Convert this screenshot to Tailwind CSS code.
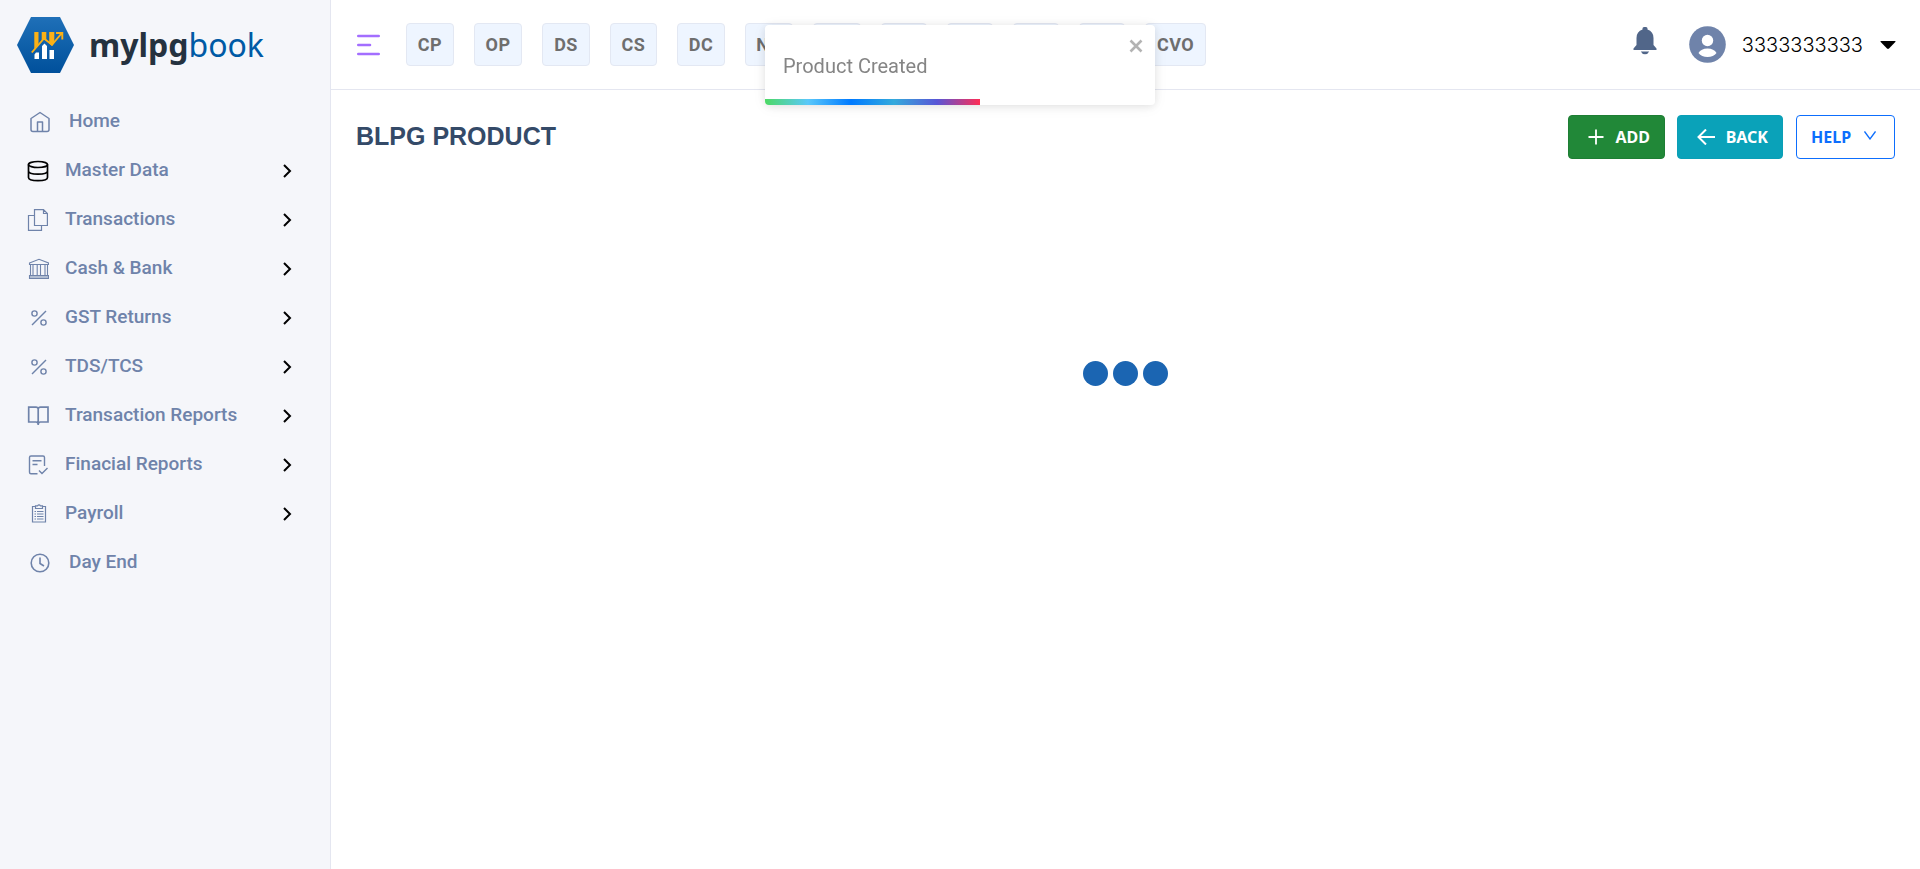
<!DOCTYPE html>
<html lang="en">
<head>
<meta charset="utf-8">
<meta name="viewport" content="width=device-width, initial-scale=1">
<title>mylpgbook</title>
<script src="https://cdn.jsdelivr.net/npm/@tailwindcss/browser@4"></script>
</head>
<body class="flex min-h-screen bg-white font-['Roboto',sans-serif]">

<aside class="w-[331px] shrink-0 border-r border-[#e4e6f0] bg-[#f5f6fa]">
  <a href="#" class="flex h-[90px] items-center pl-4">
    <svg class="h-[58px] w-[59px]" viewBox="0 0 59 58">
      <defs><linearGradient id="hex" x1="0" y1="0" x2="0" y2="1"><stop offset="0" stop-color="#1f70b8"/><stop offset="1" stop-color="#00509b"/></linearGradient></defs>
      <path d="M15 1H44L58 29L44 57H15L1 29Z" fill="url(#hex)"/>
      <path d="M18.500 43V38.500L20 36.500H23V43ZM26 43V30L28.500 27.500L31 30V43ZM33.500 43V34H38V43Z" fill="#fff"/>
      <path d="M18.300 16H22.500V28L18.300 33ZM25.700 16H30.300V25L28 22L25.700 25ZM33.200 16H38.300V27L36 30L33.200 27.500Z" fill="#fbb116"/>
      <path d="M15.800 36.500L28 22.500L36 28.800L45.500 17.500M40 17H46.300V23.500" fill="none" stroke="#fbb116" stroke-width="1.900"/>
    </svg>
    <span class="ml-3.5 font-['Noto_Sans',sans-serif] text-[32px] leading-10 text-[#005aa5]"><b class="font-bold text-[#25323f]">mylpg</b>book</span>
  </a>
  <nav class="flex flex-col pt-[7px] text-[19px] font-medium text-[#6f83aa]">
    <a href="#" class="flex h-[49px] items-center gap-[18px] pl-[29px]">
      <svg class="size-[22px]" viewBox="0 0 22 22" fill="none" stroke="currentColor" stroke-width="1.500" stroke-linejoin="round"><path d="M2 7.500L11 1.500L20 7.500V18.500Q20 20.500 18 20.500H4Q2 20.500 2 18.500ZM8.500 20.500V11H13.500V20.500"/></svg>Home</a>
    <a href="#" class="flex h-[49px] items-center gap-4 pr-[37px] pl-[27px]">
      <svg class="size-[22px] text-black" viewBox="0 0 22 22" fill="none" stroke="currentColor" stroke-width="1.700"><ellipse cx="11" cy="4.500" rx="9.500" ry="3"/><path d="M1.500 4.500V17.500C1.500 21.700 20.500 21.700 20.500 17.500V4.500M1.500 11C1.500 15.200 20.500 15.200 20.500 11"/></svg>Master Data
      <svg class="ml-auto h-4 w-3 text-black" viewBox="0 0 12 16" fill="none" stroke="currentColor" stroke-width="2"><path d="M3 2L9 8L3 14"/></svg></a>
    <a href="#" class="flex h-[49px] items-center gap-4 pr-[37px] pl-[27px]">
      <svg class="size-[22px]" viewBox="0 0 22 22" fill="none" stroke="currentColor" stroke-width="1.200"><path d="M7.500 .600H16.500L20.400 4.500V16.500H7.500ZM16.500 .600V4.500H20.400M7.500 6.500H1.500V21.400H14.500V16.500"/></svg>Transactions
      <svg class="ml-auto h-4 w-3 text-black" viewBox="0 0 12 16" fill="none" stroke="currentColor" stroke-width="2"><path d="M3 2L9 8L3 14"/></svg></a>
    <a href="#" class="flex h-[49px] items-center gap-4 pr-[37px] pl-[27px]">
      <svg class="size-[22px]" viewBox="0 0 22 22" fill="none" stroke="currentColor" stroke-width="1.100"><path d="M2.500 5L12 1.300L21.500 5V6.500H2.500ZM3.500 6.500V17.500M6 6.500V17.500M10.200 6.500V17.500M13.500 6.500V17.500M18 6.500V17.500M20.500 6.500V17.500M2.500 17.500H21.500V20.500H2.500ZM2.500 19H21.500"/></svg>Cash &amp; Bank
      <svg class="ml-auto h-4 w-3 text-black" viewBox="0 0 12 16" fill="none" stroke="currentColor" stroke-width="2"><path d="M3 2L9 8L3 14"/></svg></a>
    <a href="#" class="flex h-[49px] items-center gap-4 pr-[37px] pl-[27px]">
      <svg class="size-[22px]" viewBox="0 0 22 22" fill="none" stroke="currentColor" stroke-width="1.400"><circle cx="7.500" cy="6.500" r="2.600"/><circle cx="16.500" cy="15.500" r="2.600"/><path d="M19 4L5 18"/></svg>GST Returns
      <svg class="ml-auto h-4 w-3 text-black" viewBox="0 0 12 16" fill="none" stroke="currentColor" stroke-width="2"><path d="M3 2L9 8L3 14"/></svg></a>
    <a href="#" class="flex h-[49px] items-center gap-4 pr-[37px] pl-[27px]">
      <svg class="size-[22px]" viewBox="0 0 22 22" fill="none" stroke="currentColor" stroke-width="1.400"><circle cx="7.500" cy="6.500" r="2.600"/><circle cx="16.500" cy="15.500" r="2.600"/><path d="M19 4L5 18"/></svg>TDS/TCS
      <svg class="ml-auto h-4 w-3 text-black" viewBox="0 0 12 16" fill="none" stroke="currentColor" stroke-width="2"><path d="M3 2L9 8L3 14"/></svg></a>
    <a href="#" class="flex h-[49px] items-center gap-4 pr-[37px] pl-[27px]">
      <svg class="size-[22px]" viewBox="0 0 22 22" fill="none" stroke="currentColor" stroke-width="1.700"><path d="M11.200 4Q11 2.200 9 2.200H1.700V17H9Q11.200 17 11.200 19.500Q11.200 17 13.400 17H21V2.200H13.400Q11.400 2.200 11.200 4V20"/></svg>Transaction Reports
      <svg class="ml-auto h-4 w-3 text-black" viewBox="0 0 12 16" fill="none" stroke="currentColor" stroke-width="2"><path d="M3 2L9 8L3 14"/></svg></a>
    <a href="#" class="flex h-[49px] items-center gap-4 pr-[37px] pl-[27px]">
      <svg class="size-[22px]" viewBox="0 0 22 22" fill="none" stroke="currentColor" stroke-width="1.400"><path d="M10.500 19.800H4Q2.500 19.800 2.500 18.300V3.500Q2.500 2 4 2H16Q17.500 2 17.500 3.500V12M5.500 6.800H14.500M5.500 10.500H10.500M12 16.500L15 19.500L20.500 14"/></svg>Finacial Reports
      <svg class="ml-auto h-4 w-3 text-black" viewBox="0 0 12 16" fill="none" stroke="currentColor" stroke-width="2"><path d="M3 2L9 8L3 14"/></svg></a>
    <a href="#" class="flex h-[49px] items-center gap-4 pr-[37px] pl-[27px]">
      <svg class="size-[22px]" viewBox="0 0 22 22" fill="none" stroke="currentColor" stroke-width="1.200"><path d="M8.500 3.500H5.500V19H18.500V3.500H15.500M8.500 2.800H10.500Q12 .800 13.500 2.800H15.500V5.500H8.500ZM7.500 8.500H9M10 8.500H16.500M7.500 11H9M10 11H16.500M7.500 13.500H9M10 13.500H16.500M7.500 16H9M10 16H16.500"/></svg>Payroll
      <svg class="ml-auto h-4 w-3 text-black" viewBox="0 0 12 16" fill="none" stroke="currentColor" stroke-width="2"><path d="M3 2L9 8L3 14"/></svg></a>
    <a href="#" class="flex h-[49px] items-center gap-[18px] pl-[29px]">
      <svg class="size-[22px]" viewBox="0 0 22 22" fill="none" stroke="currentColor" stroke-width="1.600"><circle cx="11" cy="11" r="8.800"/><path d="M11 5.500V11.500L15 14"/></svg>Day End</a>
  </nav>
</aside>

<div class="min-w-0 grow">
  <header class="flex h-[90px] items-center border-b border-[#e4e6f0] pr-6 pl-[25px]">
    <button type="button" aria-label="Toggle menu" class="mr-[25px]">
      <svg class="h-[22px] w-[25px]" viewBox="0 0 25 22" fill="none" stroke="#a36eff" stroke-width="2.600" stroke-linecap="round"><path d="M2.300 2H22.700M2.300 11H14M2.300 20H22.700"/></svg>
    </button>
    <div class="flex gap-5 text-lg font-bold tracking-wide text-[#6e6e6e]">
      <button type="button" class="h-[43px] w-12 rounded border border-[#e3e8f3] bg-[#eef5ff]">CP</button>
      <button type="button" class="h-[43px] w-12 rounded border border-[#e3e8f3] bg-[#eef5ff]">OP</button>
      <button type="button" class="h-[43px] w-12 rounded border border-[#e3e8f3] bg-[#eef5ff]">DS</button>
      <button type="button" class="h-[43px] w-[47px] rounded border border-[#e3e8f3] bg-[#eef5ff]">CS</button>
      <button type="button" class="h-[43px] w-12 rounded border border-[#e3e8f3] bg-[#eef5ff]">DC</button>
      <button type="button" class="h-[43px] w-12 rounded border border-[#e3e8f3] bg-[#eef5ff]">NC</button>
      <button type="button" class="h-[43px] w-12 rounded border border-[#e3e8f3] bg-[#eef5ff]">RC</button>
      <button type="button" class="h-[43px] w-[46px] rounded border border-[#e3e8f3] bg-[#eef5ff]">TV</button>
      <button type="button" class="h-[43px] w-[46px] rounded border border-[#e3e8f3] bg-[#eef5ff]">PV</button>
      <button type="button" class="h-[43px] w-[46px] rounded border border-[#e3e8f3] bg-[#eef5ff]">RV</button>
      <button type="button" class="h-[43px] w-[46px] rounded border border-[#e3e8f3] bg-[#eef5ff]">JV</button>
      <button type="button" class="h-[43px] w-[61px] rounded border border-[#e3e8f3] bg-[#eef5ff]">CVO</button>
    </div>
    <div class="ml-auto flex items-center">
      <button type="button" aria-label="Notifications" class="mr-8 pb-2">
        <svg class="h-7 w-6" viewBox="0 0 24 28" fill="#516689"><path d="M9.500 1.500Q9.500 0 11 0H13Q14.500 0 14.500 1.500V2.500Q20.500 4.500 20.500 11V18L23.500 21.500V23H.500V21.500L3.500 18V11Q3.500 4.500 9.500 2.500ZM7.800 24.500H16.200Q15 27.200 12 27.200Q9 27.200 7.800 24.500Z"/></svg>
      </button>
      <button type="button" class="flex items-center font-['Inter',sans-serif] text-xl font-light text-black">
        <svg class="mr-4 size-[37px]" viewBox="0 0 37 37"><circle cx="18.500" cy="18.500" r="18.300" fill="#6f83aa"/><circle cx="18.500" cy="14.500" r="5.700" fill="#fff"/><path d="M9.500 27Q12 22.500 18.500 22.500T27.500 27Q24.500 31 18.500 31T9.500 27Z" fill="#fff"/></svg>
        3333333333
        <svg class="ml-[17px] h-2 w-4" viewBox="0 0 16 8"><path d="M1 0H15Q16 0 15.300 1L9 7.500Q8 8.300 7 7.500L.700 1Q0 0 1 0Z"/></svg>
      </button>
    </div>
  </header>

  <main class="px-[25px]">
    <div class="flex items-center pt-[25px]">
      <h1 class="font-['Liberation_Sans',sans-serif] text-[25px] font-bold text-[#344a68]">BLPG PRODUCT</h1>
      <div class="ml-auto flex font-['Noto_Sans',sans-serif] text-base font-bold text-white">
        <button type="button" class="mr-3 flex h-11 w-[97px] items-center justify-end gap-3 rounded border border-[#1e7e34] bg-[#218838] pr-[14px]">
          <svg class="size-4" viewBox="0 0 16 16" stroke="currentColor" stroke-width="1.800"><path d="M8 .500V15.500M.500 8H15.500"/></svg>ADD</button>
        <button type="button" class="mr-[13px] flex h-11 w-[106px] items-center justify-end gap-[11px] rounded border border-[#0a9fb6] bg-[#0aa2b9] pr-[14px]">
          <svg class="h-4 w-[18px]" viewBox="0 0 18 16" fill="none" stroke="currentColor" stroke-width="2"><path d="M9 .500L1.500 8L9 15.500M1.500 8H18"/></svg>BACK</button>
        <button type="button" class="flex h-11 w-[99px] items-center gap-[13px] rounded border border-[#0d6efd] pl-[14px] text-[#0d6efd]">HELP
          <svg class="mb-1 h-[9px] w-3" viewBox="0 0 12 9" fill="none" stroke="currentColor" stroke-width="1.300"><path d="M.500 .500L6 8L11.500 .500"/></svg></button>
      </div>
    </div>
    <div role="status" aria-label="Loading" class="flex justify-center gap-[5px] pt-[202px]">
      <span class="size-[25px] rounded-full bg-[#1b65b2]"></span>
      <span class="size-[25px] rounded-full bg-[#1b65b2]"></span>
      <span class="size-[25px] rounded-full bg-[#1b65b2]"></span>
    </div>
  </main>
</div>

<div role="alert" class="fixed top-[25px] left-1/2 h-20 w-[390px] -translate-x-1/2 overflow-hidden rounded bg-white shadow-[0_1px_10px_0_rgba(0,0,0,0.1),0_2px_15px_0_rgba(0,0,0,0.05)]">
  <p class="pt-[26px] pl-[18px] text-xl leading-[30px] text-[#858585]">Product Created</p>
  <button type="button" aria-label="Close" class="absolute top-[14px] right-3">
    <svg class="size-[14px]" viewBox="0 0 14 14" stroke="#b3b3b3" stroke-width="2.600"><path d="M1.500 1.500L12.500 12.500M12.500 1.500L1.500 12.500"/></svg>
  </button>
  <div class="absolute bottom-0 left-0 h-[6px] bg-[linear-gradient(to_right,#4cd964,#5ac8fa,#007aff,#34aadc,#5856d6,#ff2d55)]" style="width:55%"></div>
</div>
</body>
</html>
